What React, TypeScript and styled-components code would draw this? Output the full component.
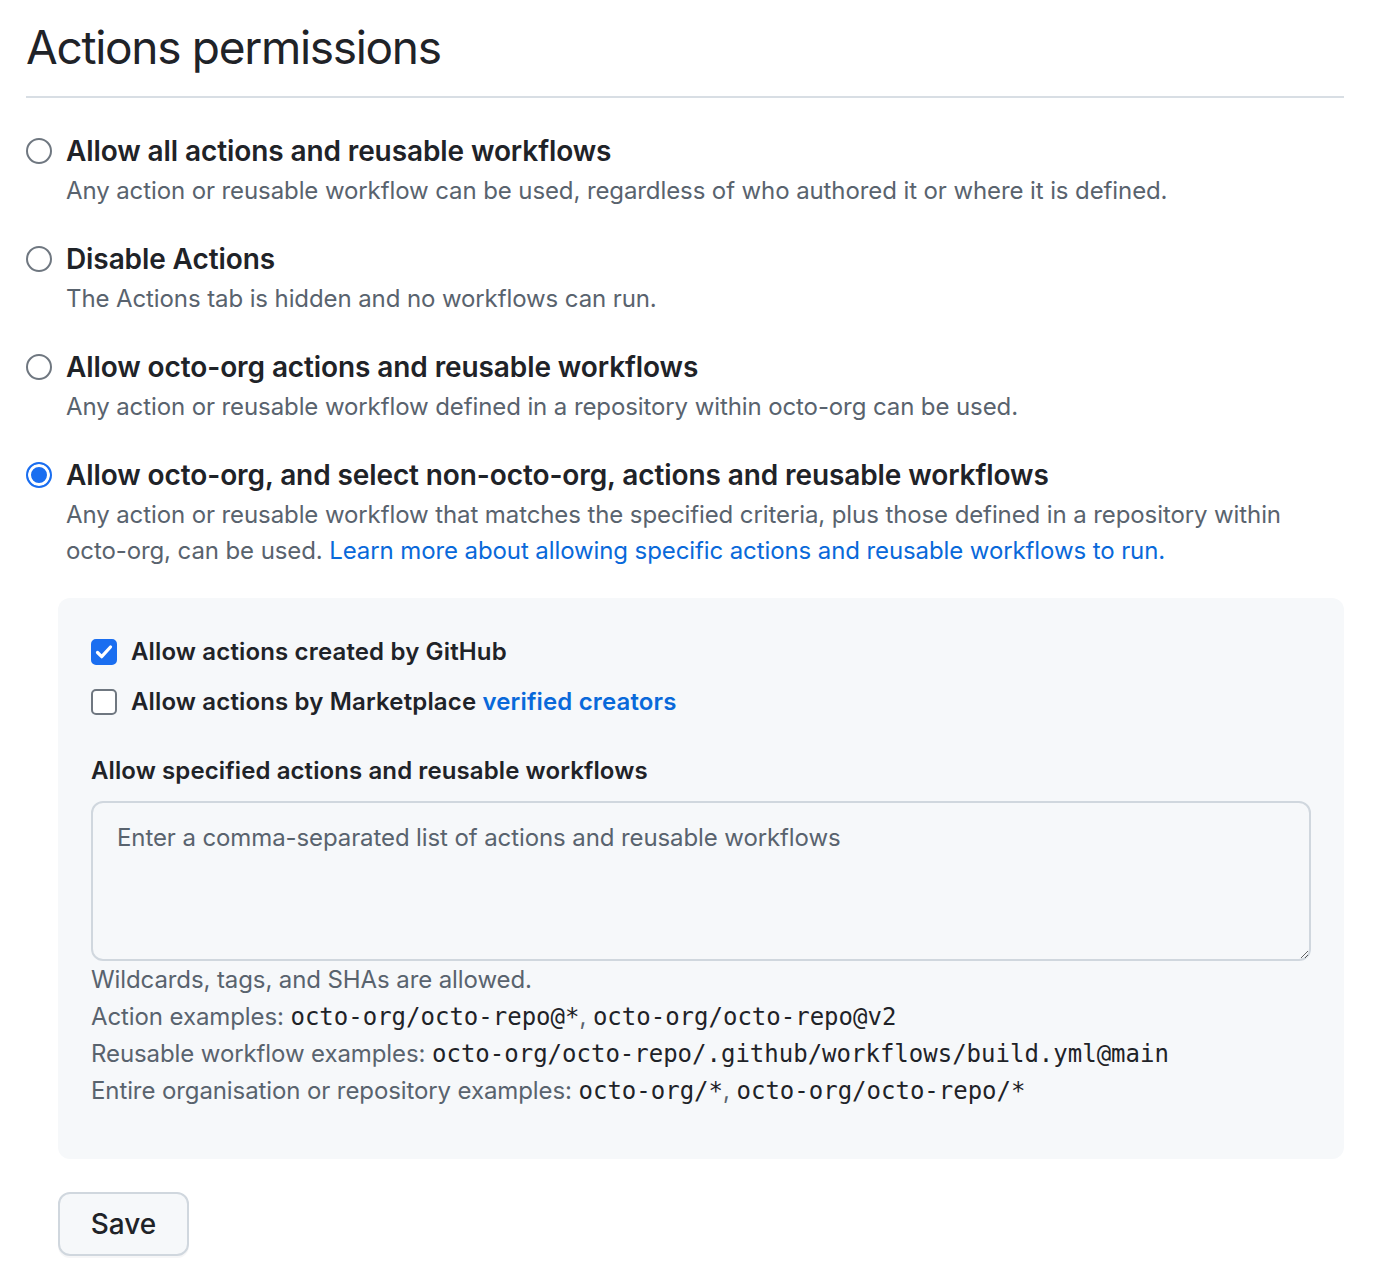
import React from "react";
import styled, { createGlobalStyle } from "styled-components";

const Global = createGlobalStyle`
  html, body { margin: 0; padding: 0; background: #ffffff; }
  body {
    font-family: Inter, "Noto Sans", "Liberation Sans", sans-serif;
    color: #1f2328;
    -webkit-font-smoothing: antialiased;
  }
  * { box-sizing: border-box; }
`;

const Page = styled.div`
  padding: 11px 32px 30px 26px;
`;

const Header = styled.div`
  border-bottom: 2px solid #d8dee4;
  padding-bottom: 13px;
  margin-bottom: 32px;
`;

const Title = styled.h2`
  margin: 0;
  font-size: 46px;
  font-weight: 400;
  line-height: 72px;
  letter-spacing: -1.3px;
`;

const OptionList = styled.div`
  display: flex;
  flex-direction: column;
  gap: 29px;
`;

const Option = styled.div`
  display: grid;
  grid-template-columns: 26px 1fr;
  column-gap: 14px;
  align-items: center;
`;

const RadioCircle = styled.span<{ $checked?: boolean }>`
  width: 26px;
  height: 26px;
  border-radius: 50%;
  border: 2px solid ${(p) => (p.$checked ? "#1a6ef0" : "#6f7780")};
  background: ${(p) => (p.$checked ? "#1a6ef0" : "#ffffff")};
  box-shadow: ${(p) => (p.$checked ? "inset 0 0 0 3px #ffffff" : "none")};
`;

const OptionLabel = styled.div`
  font-size: 28px;
  font-weight: 600;
  line-height: 42px;
  letter-spacing: -0.1px;
`;

const OptionDesc = styled.div`
  grid-column: 2;
  margin-top: 1px;
  font-size: 24px;
  line-height: 36px;
  color: #59636e;
  letter-spacing: -0.1px;
`;

const Link = styled.a`
  color: #0969da;
  text-decoration: none;
`;

const Panel = styled.div`
  margin: 29px 0 0 32px;
  background: #f6f8fa;
  border-radius: 12px;
  padding: 34px 33px 50px 33px;
`;

const CheckList = styled.div`
  display: flex;
  flex-direction: column;
  gap: 10px;
`;

const CheckRow = styled.label`
  display: flex;
  align-items: center;
  gap: 14px;
  font-size: 24px;
  font-weight: 600;
  line-height: 40px;
  letter-spacing: 0.15px;
`;

const CheckBox = styled.span<{ $checked?: boolean }>`
  width: 26px;
  height: 26px;
  border-radius: 5px;
  border: 2px solid ${(p) => (p.$checked ? "#1a6ef0" : "#6f7780")};
  background: ${(p) => (p.$checked ? "#1a6ef0" : "#ffffff")};
  display: flex;
  align-items: center;
  justify-content: center;
`;

const FieldLabel = styled.div`
  margin-top: 29px;
  font-size: 24px;
  font-weight: 600;
  line-height: 40px;
  letter-spacing: 0.1px;
`;

const TextArea = styled.textarea`
  display: block;
  margin-top: 10px;
  width: 100%;
  height: 160px;
  border: 2px solid #d0d7de;
  border-radius: 12px;
  background: #f6f8fa;
  padding: 17px 24px;
  font-family: inherit;
  font-size: 24px;
  line-height: 36px;
  color: #1f2328;
  resize: vertical;
  &::placeholder {
    color: #59636e;
    letter-spacing: -0.1px;
  }
`;

const Notes = styled.div`
  display: flex;
  flex-direction: column;
`;

const NoteLine = styled.div`
  height: 37px;
  font-size: 24px;
  line-height: 37px;
  color: #59636e;
  letter-spacing: -0.1px;
  white-space: nowrap;
`;

const Code = styled.code`
  font-family: "DejaVu Sans Mono", "Liberation Mono", monospace;
  font-size: 24px;
  line-height: 24px;
  color: #1f2328;
  letter-spacing: 0px;
`;

const SaveButton = styled.button`
  margin: 33px 0 0 32px;
  width: 131px;
  height: 64px;
  border: 2px solid #d0d7de;
  border-radius: 12px;
  background: #f6f8fa;
  font-family: inherit;
  font-size: 28px;
  font-weight: 500;
  color: #1f2328;
  box-shadow: 0 2px 0 rgba(31, 35, 40, 0.04);
`;

const Check = () => (
  <svg width="20" height="20" viewBox="0 0 20 20" fill="none">
    <path d="M3.5 10.5l4.2 4.2L16.5 5" stroke="#fff" strokeWidth="3.2" strokeLinecap="round" strokeLinejoin="round" />
  </svg>
);

const options = [
  {
    label: "Allow all actions and reusable workflows",
    desc: "Any action or reusable workflow can be used, regardless of who authored it or where it is defined.",
  },
  { label: "Disable Actions", desc: "The Actions tab is hidden and no workflows can run." },
  {
    label: "Allow octo-org actions and reusable workflows",
    desc: "Any action or reusable workflow defined in a repository within octo-org can be used.",
  },
];

export default function App() {
  return (
    <>
      <Global />
      <Page>
        <Header>
          <Title>Actions permissions</Title>
        </Header>
        <OptionList>
          {options.map((o) => (
            <Option key={o.label}>
              <RadioCircle />
              <OptionLabel>{o.label}</OptionLabel>
              <OptionDesc>{o.desc}</OptionDesc>
            </Option>
          ))}
          <Option>
            <RadioCircle $checked />
            <OptionLabel>Allow octo-org, and select non-octo-org, actions and reusable workflows</OptionLabel>
            <OptionDesc>
              Any action or reusable workflow that matches the specified criteria, plus those defined in a repository within
              octo-org, can be used.{" "}
              <Link href="#">Learn more about allowing specific actions and reusable workflows to run.</Link>
            </OptionDesc>
          </Option>
        </OptionList>
        <Panel>
          <CheckList>
            <CheckRow>
              <CheckBox $checked>
                <Check />
              </CheckBox>
              Allow actions created by GitHub
            </CheckRow>
            <CheckRow>
              <CheckBox />
              <span>
                Allow actions by Marketplace <Link href="#">verified creators</Link>
              </span>
            </CheckRow>
          </CheckList>
          <FieldLabel>Allow specified actions and reusable workflows</FieldLabel>
          <TextArea placeholder="Enter a comma-separated list of actions and reusable workflows" />
          <Notes>
            <NoteLine>Wildcards, tags, and SHAs are allowed.</NoteLine>
            <NoteLine>
              Action examples: <Code>octo-org/octo-repo@*</Code>, <Code>octo-org/octo-repo@v2</Code>
            </NoteLine>
            <NoteLine>
              Reusable workflow examples: <Code>octo-org/octo-repo/.github/workflows/build.yml@main</Code>
            </NoteLine>
            <NoteLine>
              Entire organisation or repository examples: <Code>octo-org/*</Code>, <Code>octo-org/octo-repo/*</Code>
            </NoteLine>
          </Notes>
        </Panel>
        <SaveButton>Save</SaveButton>
      </Page>
    </>
  );
}
